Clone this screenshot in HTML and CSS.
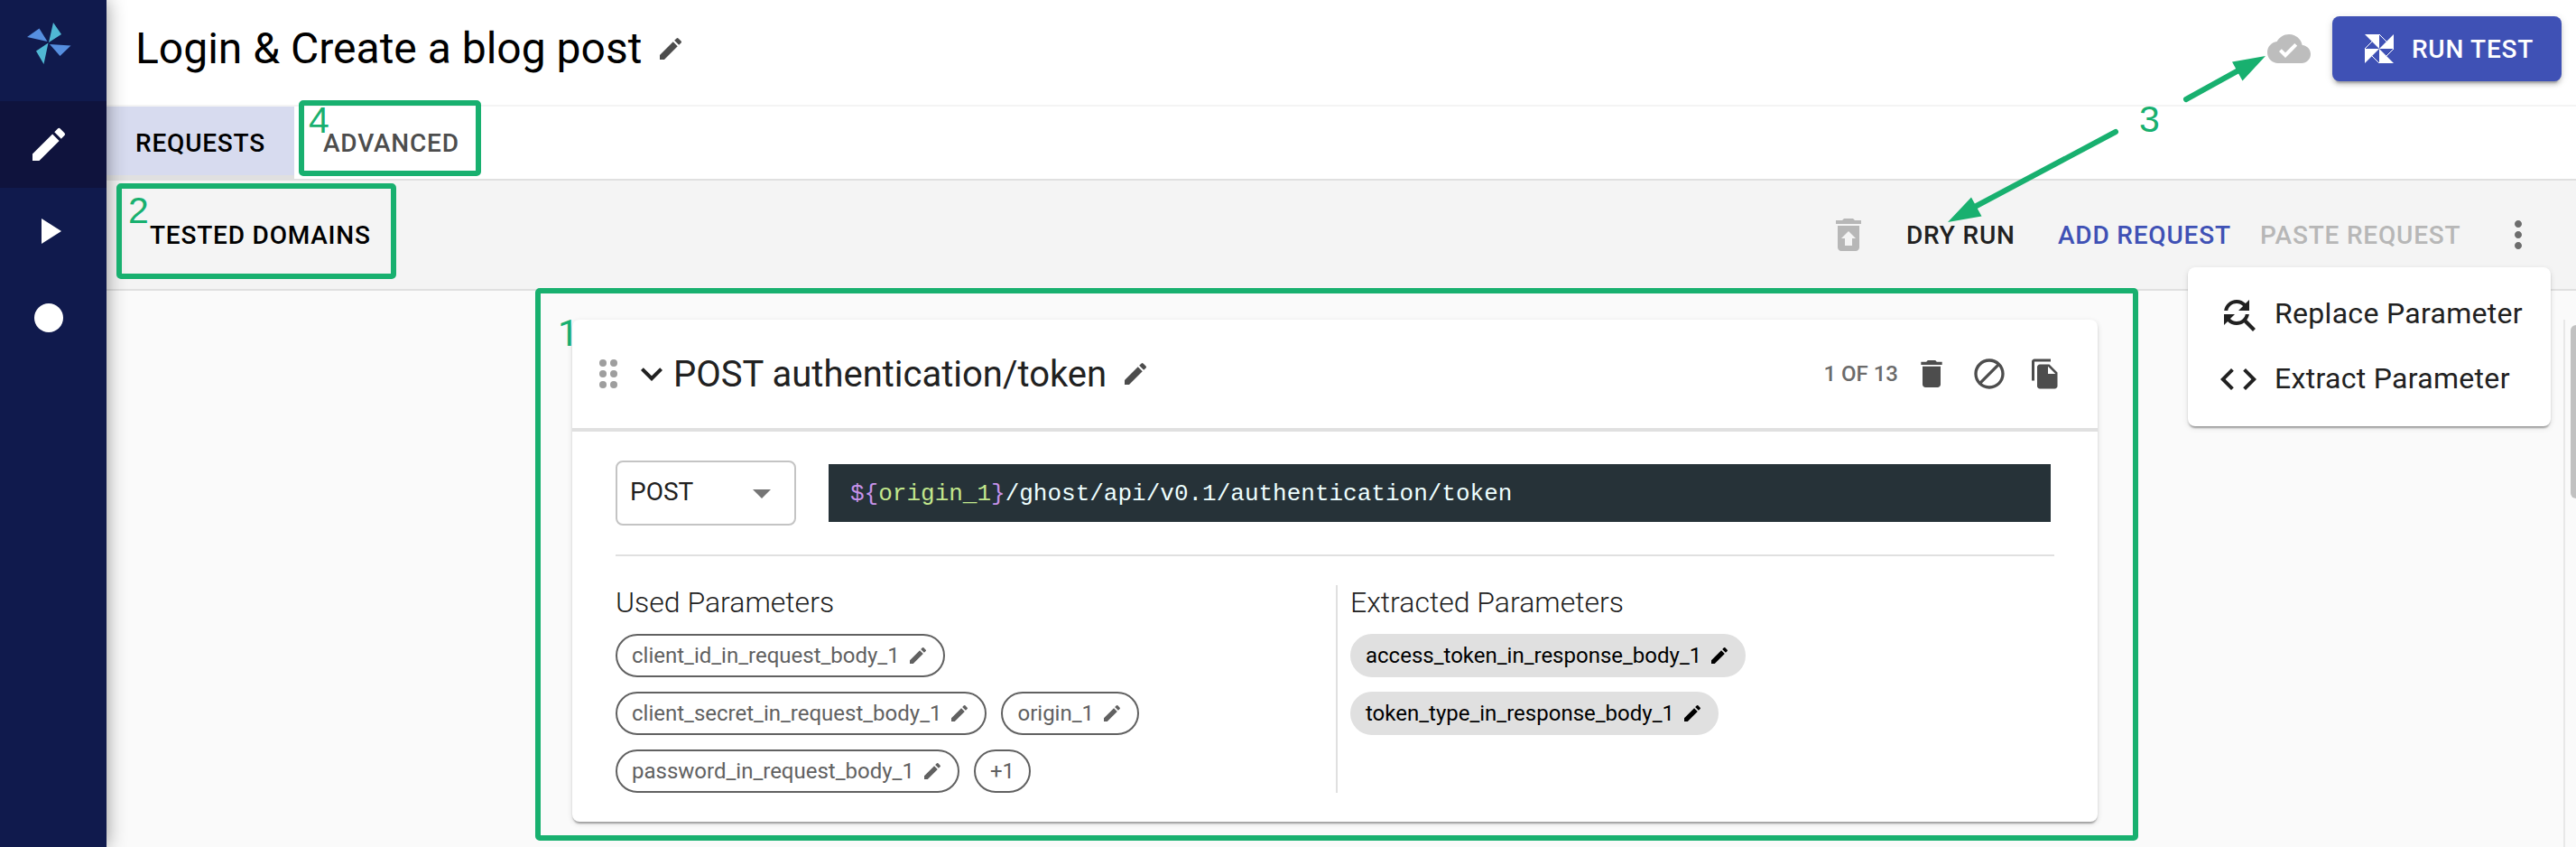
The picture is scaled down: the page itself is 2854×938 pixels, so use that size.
FILE: index.html
```html
<!DOCTYPE html>
<html lang="en">
<head>
<meta charset="utf-8">
<title>Login &amp; Create a blog post</title>
<link rel="stylesheet" href="styles.css">
</head>
<body>
<svg class="defs" aria-hidden="true">
  <symbol id="edit" viewBox="0 0 24 24"><path d="M3 17.25V21h3.75L17.81 9.94l-3.75-3.75L3 17.25zM20.71 7.04c.39-.39.39-1.02 0-1.41l-2.34-2.34a.9959.9959 0 0 0-1.41 0l-1.83 1.83 3.75 3.75 1.83-1.83z"/></symbol>
  <symbol id="restore" viewBox="0 0 24 24"><path d="M19 4h-3.5l-1-1h-5l-1 1H5v2h14V4zM6 7v12c0 1.1.9 2 2 2h8c1.1 0 2-.9 2-2V7H6zm8 7v4h-4v-4H8l4-4 4 4h-2z"/></symbol>
  <symbol id="more" viewBox="0 0 24 24"><path d="M12 8c1.1 0 2-.9 2-2s-.9-2-2-2-2 .9-2 2 .9 2 2 2zm0 2c-1.1 0-2 .9-2 2s.9 2 2 2 2-.9 2-2-.9-2-2-2zm0 6c-1.1 0-2 .9-2 2s.9 2 2 2 2-.9 2-2-.9-2-2-2z"/></symbol>
  <symbol id="cloud" viewBox="0 0 24 24"><path d="M19.35 10.04C18.67 6.59 15.64 4 12 4 9.11 4 6.6 5.64 5.35 8.04 2.34 8.36 0 10.91 0 14c0 3.31 2.69 6 6 6h13c2.76 0 5-2.24 5-5 0-2.64-2.05-4.78-4.65-4.96zM10 17l-3.5-3.5 1.41-1.41L10 14.17 15.18 9l1.41 1.41L10 17z"/></symbol>
  <symbol id="find" viewBox="0 0 24 24"><path d="M11 6c1.38 0 2.63.56 3.54 1.46L12 10h6V4l-2.05 2.05C14.68 4.78 12.93 4 11 4c-3.53 0-6.43 2.61-6.92 6H6.1c.46-2.28 2.48-4 4.9-4zm5.64 9.14c.66-.9 1.12-1.97 1.28-3.14H15.9c-.46 2.28-2.48 4-4.9 4-1.38 0-2.63-.56-3.54-1.46L10 12H4v6l2.05-2.05C7.32 17.22 9.07 18 11 18c1.55 0 2.98-.51 4.14-1.36L20 21.49 21.49 20l-4.85-4.86z"/></symbol>
  <symbol id="code" viewBox="0 0 24 24"><path d="M9.4 16.6L4.8 12l4.6-4.6L8 6l-6 6 6 6 1.4-1.4zm5.2 0l4.6-4.6-4.6-4.6L16 6l6 6-6 6-1.4-1.4z"/></symbol>
  <symbol id="drag" viewBox="0 0 24 24"><circle cx="9" cy="6" r="2"/><circle cx="15" cy="6" r="2"/><circle cx="9" cy="12" r="2"/><circle cx="15" cy="12" r="2"/><circle cx="9" cy="18" r="2"/><circle cx="15" cy="18" r="2"/></symbol>
  <symbol id="expand" viewBox="0 0 24 24"><path d="M16.59 8.59L12 13.17 7.41 8.59 6 10l6 6 6-6z"/></symbol>
  <symbol id="trash" viewBox="0 0 24 24"><path d="M6 19c0 1.1.9 2 2 2h8c1.1 0 2-.9 2-2V7H6v12zM19 4h-3.5l-1-1h-5l-1 1H5v2h14V4z"/></symbol>
  <symbol id="block" viewBox="0 0 24 24"><path d="M12 2C6.48 2 2 6.48 2 12s4.480 10 10 10 10-4.480 10-10S17.520 2 12 2zM4 12c0-4.420 3.580-8 8-8 1.850 0 3.550.630 4.900 1.690L5.690 16.900C4.630 15.550 4 13.850 4 12zm8 8c-1.850 0-3.550-.630-4.900-1.690L18.310 7.100C19.370 8.450 20 10.150 20 12c0 4.420-3.580 8-8 8z"/></symbol>
  <symbol id="copy" viewBox="0 0 24 24"><path d="M16 1H4c-1.1 0-2 .9-2 2v14h2V3h12V1zm-1 4l6 6v10c0 1.1-.9 2-2 2H7.990C6.890 23 6 22.100 6 21l.010-14c0-1.100.890-2 1.990-2h7zm-1 7h5.500L14 6.500V12z"/></symbol>
  <symbol id="drop" viewBox="0 0 24 24"><path d="M7 10l5 5 5-5z"/></symbol>
</svg>

<div class="app">
  <nav class="sidebar">
    <div class="logo">
      <svg width="50" height="48" viewBox="0 0 50 48">
        <path fill="#50b8d4" d="M30 1l9 13-14 9zM24.500 23.500l-5 23.500-8.500-14.500z"/>
        <path fill="#568fe0" d="M1 17L14.500 7.500l9 14.500zM26 25l23.500 1.500-12 11.500z"/>
      </svg>
    </div>
    <div class="nav-item active"><svg class="i48"><use href="#edit"/></svg></div>
    <div class="nav-item"><svg class="i48" viewBox="0 0 24 24"><path d="M8 5v14l11-7z"/></svg></div>
    <div class="nav-item"><svg class="i48" viewBox="0 0 24 24"><circle cx="12" cy="12" r="8"/></svg></div>
  </nav>

  <div class="main">
    <header class="header">
      <h1 class="title">Login &amp; Create a blog post</h1>
      <svg class="i32 title-edit"><use href="#edit"/></svg>
      <svg class="i48 cloud"><use href="#cloud"/></svg>
      <button class="run">
        <svg width="34" height="34" viewBox="0 0 34 34">
          <path fill="#fff" d="M1 1h16v16zM33 1v16H17zM33 33H17V17zM1 33V17h16z"/>
          <path fill="none" stroke="#fff" d="M17 1l8 8M33 17l-8 8M17 33l-8-8M1 17l8-8"/>
        </svg>
        <span>RUN TEST</span>
      </button>
    </header>

    <div class="tabs">
      <div class="tab selected">REQUESTS</div>
      <div class="tab">ADVANCED</div>
    </div>

    <div class="toolbar">
      <span class="domains">TESTED DOMAINS</span>
      <svg class="i48 restore"><use href="#restore"/></svg>
      <span class="dry">DRY RUN</span>
      <span class="add">ADD REQUEST</span>
      <span class="paste">PASTE REQUEST</span>
      <svg class="i48 more"><use href="#more"/></svg>
    </div>

    <div class="content">
      <div class="note-1">1</div>
      <section class="card">
        <div class="card-head">
          <svg class="i48 drag"><use href="#drag"/></svg>
          <svg class="i48 expand"><use href="#expand"/></svg>
          <h2 class="card-title">POST authentication/token</h2>
          <svg class="i32 card-edit"><use href="#edit"/></svg>
          <span class="count">1 OF 13</span>
          <svg class="i40 act-trash"><use href="#trash"/></svg>
          <svg class="i40 act-block"><use href="#block"/></svg>
          <svg class="i36 act-copy"><use href="#copy"/></svg>
        </div>
        <div class="card-body">
          <div class="request">
            <div class="select"><span>POST</span><svg class="i48"><use href="#drop"/></svg></div>
            <div class="url"><span class="br">${</span><span class="var">origin_1</span><span class="br">}</span>/ghost/api/v0.1/authentication/token</div>
          </div>
          <div class="params">
            <div class="used">
              <h3>Used Parameters</h3>
              <div class="chips">
                <div class="row"><span class="chip">client_id_in_request_body_1<svg class="i24"><use href="#edit"/></svg></span></div>
                <div class="row"><span class="chip">client_secret_in_request_body_1<svg class="i24"><use href="#edit"/></svg></span><span class="chip">origin_1<svg class="i24"><use href="#edit"/></svg></span></div>
                <div class="row"><span class="chip">password_in_request_body_1<svg class="i24"><use href="#edit"/></svg></span><span class="chip plus">+1</span></div>
              </div>
            </div>
            <div class="extracted">
              <h3>Extracted Parameters</h3>
              <div class="chips">
                <div class="row"><span class="chip filled">access_token_in_response_body_1<svg class="i24"><use href="#edit"/></svg></span></div>
                <div class="row"><span class="chip filled">token_type_in_response_body_1<svg class="i24"><use href="#edit"/></svg></span></div>
              </div>
            </div>
          </div>
        </div>
      </section>
      <div class="scroll"><div class="thumb"></div></div>
    </div>
  </div>

  <div class="menu">
    <div class="menu-item"><svg class="i48"><use href="#find"/></svg><span>Replace Parameter</span></div>
    <div class="menu-item"><svg class="i48"><use href="#code"/></svg><span>Extract Parameter</span></div>
  </div>

  <div class="frame frame-1"></div>
  <div class="frame frame-2"></div>
  <div class="frame frame-4"></div>
  <div class="num num-2">2</div>
  <div class="num num-3">3</div>
  <div class="num num-4">4</div>
  <svg class="arrows" width="400" height="220" viewBox="2140 40 400 220">
    <path class="shaft" d="M2422 110L2480 78M2344 146L2186 230"/>
    <path d="M2510 62l-37 6.500 11.500 21zM2158 246l26-27.500 11.500 21z"/>
  </svg>
</div>
</body>
</html>
```
FILE: styles.css
```css
* { box-sizing: border-box; }
body {
  margin: 0;
  font-family: Roboto, "Liberation Sans", sans-serif;
  color: #212121;
  background: #fafafa;
}
h1, h2, h3 { margin: 0; font-weight: 400; white-space: nowrap; }
svg { display: block; flex: none; fill: currentColor; }
.defs { position: absolute; width: 0; height: 0; }
.i24 { width: 24px; height: 24px; }
.i32 { width: 32px; height: 32px; }
.i36 { width: 36px; height: 36px; }
.i40 { width: 40px; height: 40px; }
.i48 { width: 48px; height: 48px; }

.app { position: relative; display: flex; width: 2854px; height: 938px; overflow: hidden; }

/* Sidebar */
.sidebar {
  position: relative;
  z-index: 2;
  flex: none;
  width: 118px;
  background: #101a4d;
  color: #fff;
  box-shadow: 0 0 20px rgba(0, 0, 0, .42);
}
.logo { height: 112px; padding: 24px 0 0 29px; }
.nav-item { height: 96px; display: flex; align-items: center; padding-left: 30px; }
.nav-item.active { background: #0f133d; }

.main { flex: 1; display: flex; flex-direction: column; min-width: 0; }

/* Header */
.header {
  height: 118px;
  flex: none;
  display: flex;
  align-items: center;
  padding: 0 16px 8px 32px;
  background: #fff;
  border-bottom: 2px solid #f4f4f4;
}
.title { font-size: 48px; line-height: 56px; color: #000; }
.title-edit { margin-left: 16px; color: #4d4d4d; }
.cloud { margin-left: auto; color: #bdbdbd; }
.run {
  display: flex;
  align-items: center;
  gap: 19px;
  width: 254px;
  height: 72px;
  margin-left: 24px;
  padding: 0 0 0 35px;
  border: 0;
  border-radius: 8px;
  background: #3f51b5;
  color: #fff;
  font: 500 28px Roboto, sans-serif;
  letter-spacing: .75px;
  box-shadow: 0 6px 2px -4px rgba(0, 0, 0, .2), 0 4px 4px rgba(0, 0, 0, .14), 0 2px 10px rgba(0, 0, 0, .12);
}

/* Tabs */
.tabs {
  display: flex;
  height: 82px;
  flex: none;
  background: #fff;
  border-bottom: 2px solid #e0e0e0;
  font-weight: 500;
  font-size: 28px;
  letter-spacing: .8px;
  color: #4d4d4d;
}
.tab { height: 80px; line-height: 82px; padding: 0 32px; }
.tab.selected { width: 208px; height: 82px; background: #d7dbef; color: #000; border-bottom: 6px solid #e0e0e0; }

/* Toolbar */
.toolbar {
  display: flex;
  align-items: center;
  flex: none;
  height: 122px;
  padding: 0 40px 0 48px;
  background: #f4f4f4;
  border-bottom: 2px solid #e0e0e0;
  font-size: 28px;
  font-weight: 500;
  letter-spacing: .8px;
  white-space: nowrap;
}
.domains { color: #000; }
.restore { margin-left: auto; color: #b7b7b7; }
.dry { width: 168px; margin-left: 40px; }
.add { width: 224px; color: #3f51b5; }
.paste { width: 262px; color: #b7b7b7; }
.more { color: #6d6d6d; }

/* Content */
.content { position: relative; flex: 1; display: flex; padding: 32px 0 0 516px; }
.card {
  position: relative;
  width: 1690px;
  height: 556px;
  border-radius: 8px;
  background: #fff;
  box-shadow: 0 4px 2px -2px rgba(0, 0, 0, .2), 0 2px 2px rgba(0, 0, 0, .14), 0 2px 6px rgba(0, 0, 0, .12);
}
.card-head {
  display: flex;
  align-items: center;
  height: 124px;
  padding: 0 40px 0 16px;
  border-bottom: 4px solid #e0e0e0;
}
.drag { color: #9e9e9e; }
.card-title { padding-top: 1px; font-size: 40px; line-height: 48px; }
.card-edit { margin-left: 16px; color: #4d4d4d; }
.count { margin-left: auto; font-size: 24px; font-weight: 500; color: #6b6b6b; }
.act-trash { margin-left: 17px; color: #4d4d4d; }
.act-block { margin-left: 24px; color: #4d4d4d; }
.act-copy { margin-left: 24px; color: #4d4d4d; }
.card-body { padding: 32px 48px 0; }
.request { display: flex; align-items: center; gap: 36px; height: 106px; padding-bottom: 32px; border-bottom: 2px solid #e0e0e0; }
.select {
  display: flex;
  align-items: center;
  justify-content: space-between;
  width: 200px;
  height: 72px;
  padding: 0 12px 0 14px;
  border: 2px solid #c4c4c4;
  border-radius: 8px;
  font-size: 28px;
}
.select span { padding-bottom: 3px; }
.select svg { color: #757575; }
.url {
  width: 1354px;
  height: 64px;
  padding-left: 24px;
  background: #263238;
  color: #eff;
  font: 26px/66px "Liberation Mono", "Courier New", monospace;
}
.br { color: #c792ea; }
.var { color: #c3e88d; }
.params { display: flex; height: 230px; margin-top: 32px; }
.used { width: 798px; }
.extracted { border-left: 2px solid #e0e0e0; padding-left: 14px; }
h3 { height: 54px; line-height: 38px; font-size: 32px; font-weight: 300; }
.chips { display: flex; flex-direction: column; gap: 16px; }
.row { display: flex; gap: 16px; }
.chip {
  display: flex;
  align-items: center;
  gap: 8px;
  height: 48px;
  padding: 0 16px;
  border: 2px solid #616161;
  border-radius: 24px;
  font-size: 24px;
  color: #616161;
  white-space: nowrap;
}
.chip.filled { padding: 0 15px; border-color: #e0e0e0; background: #e0e0e0; color: #000; }

/* Scrollbar */
.scroll { width: 14px; height: 584px; margin-left: auto; border-left: 2px solid #e8e8e8; padding: 6px 0 0 6px; }
.thumb { width: 6px; height: 192px; border-radius: 6px 0 0 6px; background: #c1c1c1; }

/* Popup menu */
.menu {
  position: absolute;
  left: 2424px;
  top: 296px;
  width: 402px;
  height: 176px;
  padding: 16px 32px;
  border-radius: 8px;
  background: #fff;
  box-shadow: 0 4px 2px -2px rgba(0, 0, 0, .2), 0 2px 2px rgba(0, 0, 0, .14), 0 2px 6px rgba(0, 0, 0, .12);
  font-size: 32px;
  letter-spacing: .3px;
  white-space: nowrap;
}
.menu-item { display: flex; align-items: center; gap: 16px; height: 72px; }
.menu-item span { padding-bottom: 2px; }

/* Annotations */
.frame { position: absolute; z-index: 3; border: 6px solid #18b06f; border-radius: 5px; }
.frame-1 { left: 593px; top: 319px; width: 1776px; height: 612px; }
.frame-2 { left: 129px; top: 203px; width: 310px; height: 106px; }
.frame-4 { left: 331px; top: 111px; width: 202px; height: 84px; }
.num, .note-1 { position: absolute; z-index: 3; font: 41px/46px "Liberation Sans", Arial, sans-serif; color: #18b06f; }
.note-1 { z-index: 0; left: 500px; top: 24px; font-family: Roboto, sans-serif; }
.num-2 { left: 142px; top: 210px; }
.num-3 { left: 2370px; top: 109px; }
.num-4 { left: 342px; top: 110px; }
.arrows { position: absolute; z-index: 3; left: 2140px; top: 40px; fill: #18b06f; }
.shaft { fill: none; stroke: #18b06f; stroke-width: 6; stroke-linecap: round; }
```
